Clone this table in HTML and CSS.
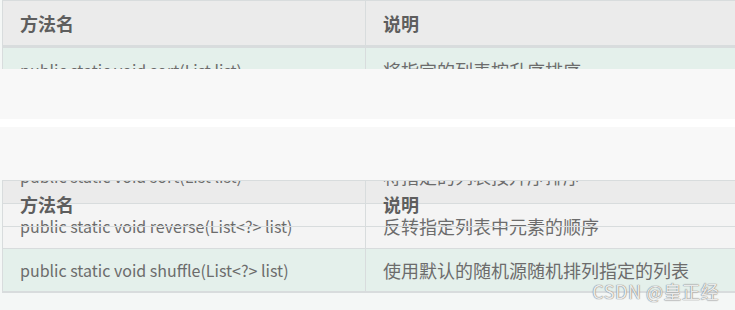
FILE: index.html
```html
<!DOCTYPE html>
<html lang="zh-CN">
<head>
    <meta charset="UTF-8">
    <meta name="viewport" content="width=device-width, initial-scale=1.0">
    <title>Collections 排序方法</title>
    <link rel="stylesheet" href="styles.css">
</head>
<body>
    <!-- upper copy of the table, cut off by the loading strip -->
    <div class="table table-top">
        <div class="row head">
            <div class="cell">方法名</div>
            <div class="cell">说明</div>
        </div>
        <div class="row green">
            <div class="cell code">public static void sort(List list)</div>
            <div class="cell">将指定的列表按升序排序</div>
        </div>
    </div>

    <div class="strip"></div>
    <div class="strip-gap"></div>
    <div class="strip strip-low"></div>

    <!-- scrolled table with its sticky header -->
    <div class="table table-scroll">
        <div class="row head short">
            <div class="cell code"><span class="peek">public static void sort(List list)</span></div>
            <div class="cell"><span class="peek">将指定的列表按升序排序</span></div>
        </div>
        <div class="row light">
            <div class="cell code">public static void reverse(List&lt;?&gt; list)</div>
            <div class="cell">反转指定列表中元素的顺序</div>
        </div>
        <div class="row green last">
            <div class="cell code">public static void shuffle(List&lt;?&gt; list)</div>
            <div class="cell">使用默认的随机源随机排列指定的列表</div>
        </div>

        <div class="row sticky">
            <div class="cell">方法名</div>
            <div class="cell">说明</div>
        </div>
    </div>

    <div class="watermark">CSDN @皇正经</div>
</body>
</html>
```

FILE: styles.css
```css
* {
    margin: 0;
    padding: 0;
    box-sizing: border-box;
}

body {
    font-family: "Noto Sans CJK SC", "Noto Sans", sans-serif;
    font-size: 18px;
    color: #6c6c6c;
    background: #f4f7f6;
    padding-left: 2px;
    height: 310px;
    overflow: hidden;
    position: relative;
}

.table {
    width: 760px;
}

.row {
    display: grid;
    grid-template-columns: 363px 1fr;
    border-top: 1px solid #d8dcdd;
}

.cell {
    display: flex;
    align-items: center;
    padding: 0 17px;
    border-left: 1px solid #d8dcdd;
    white-space: nowrap;
}

/* method signatures are set a little smaller than the chinese text */
.cell.code {
    font-size: 16px;
}

.row.head {
    height: 47px;
    background: #ebebeb;
    border-bottom: 2px solid #d8dcdd;
    font-weight: 700;
    color: #5e5e5e;
}

.row.green {
    height: 45px;
    background: #e4f0eb;
}

.row.light {
    height: 45px;
    background: #f4f4f4;
}

/* top copy */
.table-top {
    height: 69px;
    overflow: hidden;
}

/* loading strips */
.strip {
    height: 50px;
    margin-left: -2px;
    background: #f8f8f8;
}

.strip-gap {
    height: 8px;
    margin-left: -2px;
    background: #fff;
}

.strip-low {
    height: 53px;
}

/* scrolled copy */
.table-scroll {
    position: relative;
}

.row.head.short {
    height: 23px;
    border-bottom: none;
    font-weight: 400;
    color: #6c6c6c;
    overflow: hidden;
}

.short .cell {
    align-items: flex-start;
}

.peek {
    display: block;
    line-height: 24px;
    margin-top: -17px;
}

.row.last {
    border-bottom: 2px solid #d8dcdd;
}

.row.sticky {
    position: absolute;
    top: 0;
    left: 0;
    right: 0;
    height: 47px;
    border-bottom: 1px solid #d8dcdd;
    font-weight: 700;
    color: #5e5e5e;
}

.watermark {
    position: absolute;
    right: 16px;
    bottom: 6px;
    font-size: 18px;
    color: rgba(255, 255, 255, 0.85);
    text-shadow: 0 0 1px #7a7a7a, 0 0 1px #7a7a7a;
    letter-spacing: 0.5px;
}
```
